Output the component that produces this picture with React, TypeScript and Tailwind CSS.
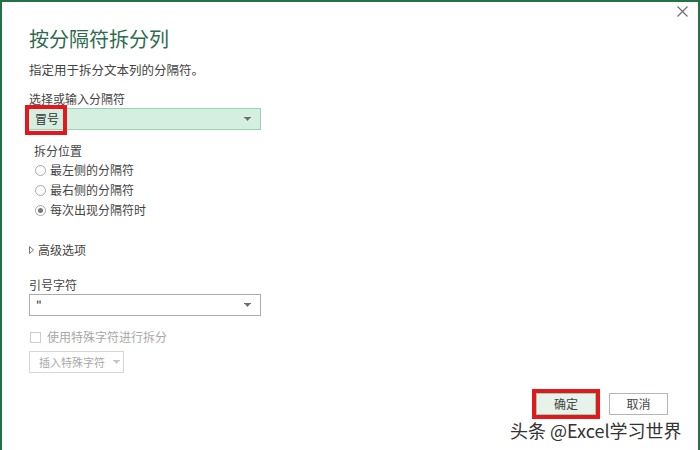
import React from "react"

function DropArrow({ color = "#6b6b6b" }: { color?: string }) {
    return (
        <svg width="7" height="5" viewBox="0 0 7 5" className="block shrink-0">
            <rect x="0" y="0" width="7" height="1" fill={color} />
            <polygon points="1,1 6,1 3.5,4" fill={color} />
        </svg>
    )
}

function Radio({ checked, label }: { checked?: boolean; label: string }) {
    return (
        <div className="h-[20px] flex items-center">
            <span className="w-[11px] h-[11px] rounded-full border border-[#a8a8a8] bg-white flex items-center justify-center ml-[6px]">
                {checked && <span className="w-[5px] h-[5px] rounded-full bg-[#777777]" />}
            </span>
            <span className="ml-[4px] text-[12px] text-[#444444]">{label}</span>
        </div>
    )
}

export default function App() {
    return (
        <div
            className="relative w-[700px] h-[450px] bg-white border-t-2 border-l-2 border-r-2 border-[#217346] overflow-hidden"
            style={{ fontFamily: '"Noto Sans CJK SC", "Noto Sans", sans-serif' }}
        >
            {/* Close */}
            <svg width="11" height="11" viewBox="0 0 11 11" className="absolute right-[10px] top-[4px]">
                <path d="M0.5 0.5 L10.5 10.5 M10.5 0.5 L0.5 10.5" stroke="#6e6e6e" strokeWidth="1.2" />
            </svg>

            <div className="flex flex-col pl-[27px] pr-[30px]">
                {/* Header */}
                <div className="mt-[23px] h-[28px] leading-[28px] text-[20px] text-[#2e6b4e]">按分隔符拆分列</div>
                <div className="mt-[7px] h-[20px] leading-[20px] text-[12.5px] text-[#444444]">指定用于拆分文本列的分隔符。</div>

                {/* Delimiter */}
                <div className="mt-[10px] h-[18px] leading-[18px] text-[12px] text-[#444444]">选择或输入分隔符</div>
                <div className="relative w-[233px] h-[22px] ml-[-1px] bg-[#d4eee0] border border-[#93d6b0] flex items-center justify-between pl-[6px] pr-[9px]">
                    <span className="text-[12px] text-[#333333]">冒号</span>
                    <DropArrow />
                    <div className="absolute left-[-4px] top-[-4px] w-[42px] h-[30px] border-4 border-[#e3171e]" />
                </div>

                {/* Split position */}
                <div className="mt-[12px] ml-[5px] h-[18px] leading-[18px] text-[12px] text-[#444444]">拆分位置</div>
                <Radio label="最左侧的分隔符" />
                <Radio label="最右侧的分隔符" />
                <Radio checked label="每次出现分隔符时" />

                {/* Advanced */}
                <div className="mt-[20px] h-[20px] flex items-center">
                    <svg width="5" height="8" viewBox="0 0 5 8" className="block">
                        <polygon points="0.5,0.5 4.5,4 0.5,7.5" fill="none" stroke="#777777" strokeWidth="1" />
                    </svg>
                    <span className="ml-[4px] text-[12px] text-[#444444]">高级选项</span>
                </div>

                {/* Quote character */}
                <div className="mt-[16px] h-[18px] leading-[18px] text-[12px] text-[#444444]">引号字符</div>
                <div className="w-[232px] h-[22px] bg-white border border-[#ababab] flex items-center justify-between pl-[6px] pr-[9px]">
                    <span className="text-[12px] text-[#333333]">"</span>
                    <DropArrow />
                </div>

                {/* Special characters */}
                <div className="mt-[11px] h-[20px] flex items-center">
                    <span className="w-[11px] h-[11px] border border-[#cccccc] bg-white ml-[1px]" />
                    <span className="ml-[6px] text-[12px] text-[#a8a8a8]">使用特殊字符进行拆分</span>
                </div>
                <div className="mt-[4px] w-[95px] h-[22px] border border-[#d6d6d6] flex items-center pl-[9px] gap-[8px] whitespace-nowrap">
                    <span className="text-[11px] text-[#a8a8a8]">插入特殊字符</span>
                    <DropArrow color="#c4c4c4" />
                </div>

                {/* Footer buttons */}
                <div className="mt-[20px] flex justify-end gap-[13px]">
                    <button className="w-[60px] h-[22px] bg-[#e6f2ea] border border-[#97cfac] text-[12px] text-[#444444] outline-4 outline-[#e3171e]">
                        确定
                    </button>
                    <button className="w-[59px] h-[22px] bg-white border border-[#b5b5b5] text-[12px] text-[#444444]">
                        取消
                    </button>
                </div>
            </div>

            {/* Watermark */}
            <div
                className="absolute left-[508px] top-[416px] h-[24px] leading-[24px] text-[18px] text-[#333333] whitespace-nowrap"
                style={{ textShadow: "0 0 2px #ffffff, 0 0 2px #ffffff" }}
            >
                头条 @Excel学习世界
            </div>
        </div>
    )
}
